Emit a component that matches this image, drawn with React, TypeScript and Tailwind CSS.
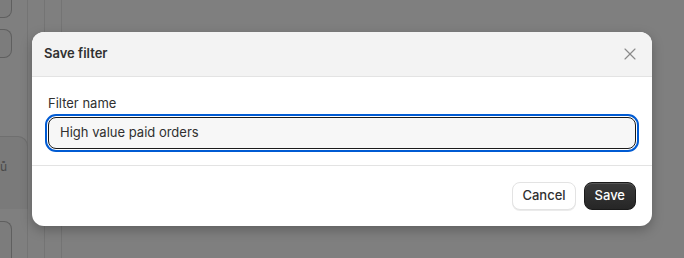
import { X } from 'lucide-react'

function BackgroundPage() {
  return (
    <div className="flex h-[258px] w-[684px] bg-[#7f7f7f]">
      {/* left rail */}
      <div className="flex w-[28px] flex-col border-r border-[#747474]">
        <div className="h-[20px] w-[12px] rounded-br-[8px] border-b border-r border-[#5f5f5f] bg-[#7c7c7c]" />
        <div className="mt-[11px] h-[31px] w-[12px] rounded-r-[8px] border border-l-0 border-[#5f5f5f] bg-[#7c7c7c]" />
        <div className="mt-[78px] flex h-[78px] w-[28px] items-start rounded-tr-[10px] border-r border-t border-[#6f6f6f] bg-[#7a7a7a] pt-[24px]">
          <span className="text-[12px] leading-none text-[#4a4a4a]">ů</span>
        </div>
        <div className="mt-[12px] h-[40px] w-[12px] rounded-tr-[8px] border-r border-t border-[#5f5f5f] bg-[#7c7c7c]" />
      </div>
      <div className="w-[17px] border-r border-[#747474]" />
      <div className="w-[17px] border-r border-[#747474]" />
      <div className="flex-1" />
    </div>
  )
}

function SaveFilterModal() {
  return (
    <div className="absolute left-[32px] top-[32px] flex w-[620px] flex-col overflow-hidden rounded-[12px] bg-white shadow-[0_4px_12px_rgba(0,0,0,0.25)]">
      {/* Header */}
      <div className="flex h-[45px] items-center justify-between border-b border-[#e3e3e3] bg-[#f3f3f3] pl-[12px] pr-[12px]">
        <span className="text-[13px] font-semibold text-[#303030]">Save filter</span>
        <button type="button" aria-label="Close" className="flex h-[20px] w-[20px] items-center justify-center">
          <X className="h-[20px] w-[20px] text-[#8a8a8a]" strokeWidth={1.4} />
        </button>
      </div>

      {/* Body */}
      <div className="flex flex-col gap-[4px] border-b border-[#e3e3e3] px-[16px] pb-[16px] pt-[16px]">
        <label className="text-[13px] leading-[20px] text-[#303030]">Filter name</label>
        <div className="flex h-[32px] items-center rounded-[8px] border border-[#1a1a1a] bg-[#f7f7f7] px-[11px] outline-2 outline-offset-1 outline-[#005bd3] outline-solid">
          <span className="text-[13px] text-[#303030]">High value paid orders</span>
        </div>
      </div>

      {/* Footer */}
      <div className="flex h-[60px] items-center justify-end gap-[8px] px-[16px]">
        <button
          type="button"
          className="h-[28px] rounded-[8px] border border-[#e3e3e3] bg-white px-[9px] text-[13px] font-medium text-[#303030] shadow-[0_1px_0_rgba(0,0,0,0.08)]"
        >
          Cancel
        </button>
        <button
          type="button"
          className="h-[28px] rounded-[8px] border border-[#1a1a1a] bg-[linear-gradient(#3a3a3a,#262626)] px-[10px] text-[13px] font-medium text-white shadow-[inset_0_1px_0_rgba(255,255,255,0.15)]"
        >
          Save
        </button>
      </div>
    </div>
  )
}

export default function App() {
  return (
    <div className="relative h-[258px] w-[684px] overflow-hidden font-['Inter',sans-serif]">
      <BackgroundPage />
      <SaveFilterModal />
    </div>
  )
}
